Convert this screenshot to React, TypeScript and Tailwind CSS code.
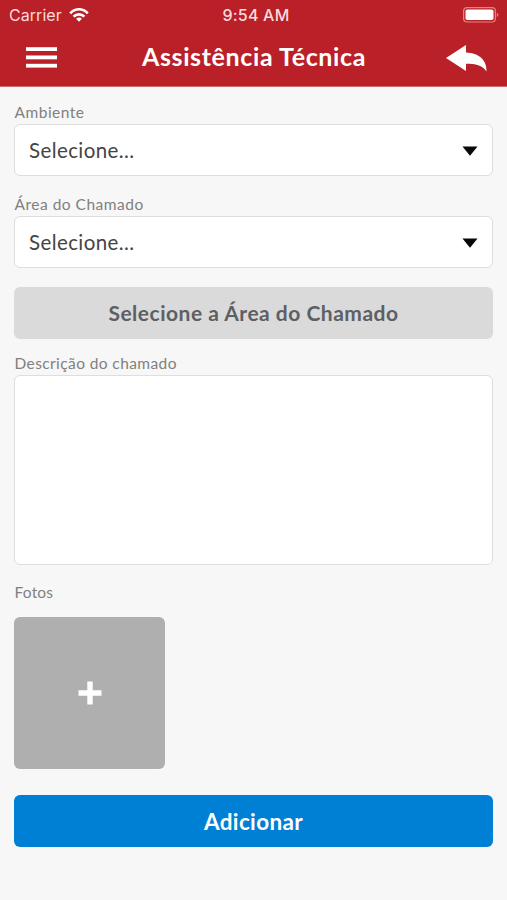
import React from 'react';

function StatusBar() {
  return (
    <div className="grid h-[30px] grid-cols-3 items-center pl-[9px] pr-2 font-['Inter','Liberation_Sans',sans-serif] text-[16px] leading-[30px] text-[#fbdcdc]">
      <div className="flex items-center gap-[7px]">
        <span className="tracking-[0.050px]">Carrier</span>
        <svg width="20" height="14" viewBox="0 0 20 14" fill="none" stroke="#fff" strokeWidth="2.6">
          <path d="M1.2 5.4C6-.1 14-.1 18.800 5.400" />
          <path d="M4.600 8.700C7.500 5.600 12.500 5.600 15.400 8.700" />
          <path d="M10 13.700L7.100 10.700C8.600 9.200 11.400 9.200 12.900 10.700Z" fill="#fff" stroke="none" />
        </svg>
      </div>
      <span className="pl-1 text-center font-medium tracking-[0.200px]">9:54 AM</span>
      <svg className="justify-self-end" width="36" height="16" viewBox="0 0 36 16">
        <rect x="0.600" y="0.600" width="31.800" height="14.400" rx="3.500" fill="none" stroke="#e08589" strokeWidth="1.200" />
        <rect x="2.500" y="2.500" width="28" height="10.600" rx="1.800" fill="#fff" />
        <path d="M33.800 5.500Q37 7.800 33.800 10.200Z" fill="#e08589" />
      </svg>
    </div>
  );
}

function Header() {
  return (
    <header className="h-[87px] border-b border-[#d06a6c] bg-[#ba2027]">
      <StatusBar />
      <div className="flex h-[54px] items-center justify-between pl-[26px] pr-[20px]">
        <button aria-label="Menu">
          <svg width="31" height="21" viewBox="0 0 31 21" fill="#fff">
            <rect y="0.200" width="31" height="3.800" />
            <rect y="8.500" width="31" height="3.800" />
            <rect y="16.800" width="31" height="3.800" />
          </svg>
        </button>
        <h1 className="pb-[2px] pl-[5px] text-[25px] font-bold leading-[30px] whitespace-nowrap tracking-[0.620px] text-white">Assistência Técnica</h1>
        <button aria-label="Voltar">
          <svg className="mt-[2px]" width="41" height="27" viewBox="0 0 41 27" fill="#fff">
            <path d="M0 13L20 0V7.500C32 8 41 14 40.500 26.500C36 20 30 18.800 20 18.800V26Z" />
          </svg>
        </button>
      </div>
    </header>
  );
}

const label = 'block h-5 pl-[0.500px] text-[15.500px] leading-5 text-[#808080]';

function Select({ title }: { title: string }) {
  return (
    <div>
      <span className={label + ' tracking-[0.500px]'}>{title}</span>
      <button className="mt-[2px] flex h-[52px] w-full items-center justify-between rounded-[6px] border border-[#dedede] bg-white pl-[14px] pr-[14px] text-[20.500px] tracking-[0.400px] text-[#444]">
        <span>Selecione...</span>
        <svg className="mt-[2px]" width="16" height="10" viewBox="0 0 16 10"><path d="M0.500 0.500H15.500L8 9.700Z" fill="#080808" /></svg>
      </button>
    </div>
  );
}

export default function App() {
  return (
    <main className="h-[900px] w-full overflow-hidden bg-[#f7f7f7] font-['Lato','Liberation_Sans',sans-serif]">
      <Header />
      <form className="px-[14px] pt-[15px]" onSubmit={(e) => e.preventDefault()}>
        <Select title="Ambiente" />
        <div className="mt-[18px]"><Select title="Área do Chamado" /></div>
        <button className="mt-[19px] block h-[52px] w-full rounded-[6px] bg-[#dadada] text-[21px] font-bold tracking-[0.500px] text-[#5d6063]">Selecione a Área do Chamado</button>
        <span className={label + ' mt-[14px] tracking-[0.400px]'}>Descrição do chamado</span>
        <textarea aria-label="Descrição do chamado" className="mt-[2px] block h-[190px] w-full resize-none rounded-[6px] border border-[#dedede] bg-white p-3 outline-none" />
        <span className={label + ' mt-[17px] tracking-[0.200px]'}>Fotos</span>
        <button aria-label="Adicionar foto" className="mt-[15px] flex h-[152px] w-[151px] items-center justify-center rounded-[6px] bg-[#afafaf]">
          <svg width="24" height="24" viewBox="0 0 24 24" fill="#fff"><path d="M9.300 0.500H14.700V9.300H23.500V14.700H14.700V23.500H9.300V14.700H0.500V9.300H9.300Z" /></svg>
        </button>
        <button className="mt-[26px] block h-[52px] w-full rounded-[6px] bg-[#0080d5] pt-[2px] text-[22.500px] font-bold tracking-[0.350px] text-white">Adicionar</button>
      </form>
    </main>
  );
}
